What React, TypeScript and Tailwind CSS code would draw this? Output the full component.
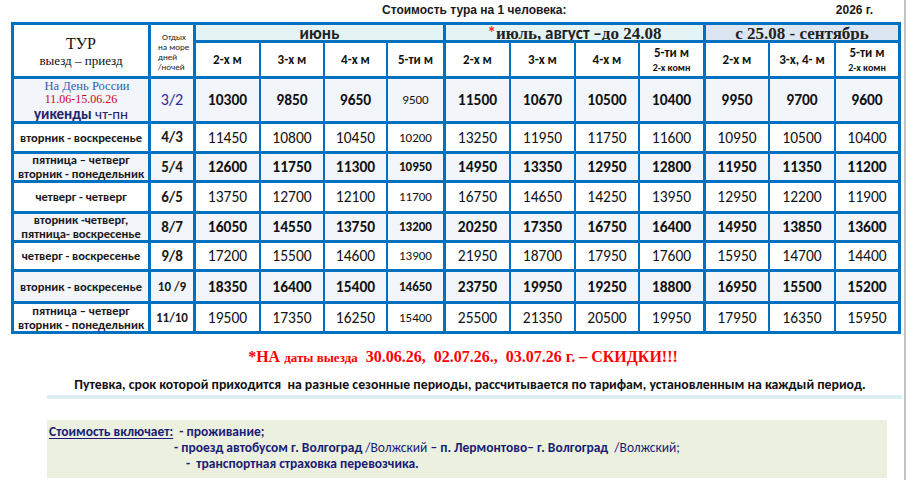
import React from "react";

const SANS = "font-['Carlito','Lato','Noto_Sans',sans-serif]";

type Row = {
  label: React.ReactNode;
  rest: React.ReactNode;
  values: string[];
  bold: boolean;
  shaded: boolean;
};

const rows: Row[] = [
  {
    label: (
      <div className="flex flex-col items-center font-normal">
        <span className="pl-3 font-['Liberation_Serif',serif] text-[12.5px] leading-[14px] text-[#2f5fae]">На День России</span>
        <span className="font-['Liberation_Serif',serif] text-[12px] leading-[13px] text-[#d0021b]">11.06-15.06.26</span>
        <span className="text-[15px] leading-[16px] text-[#23236e]">
          <b>уикенды</b> чт-пн
        </span>
      </div>
    ),
    rest: <span className="text-[16px] text-[#2b2b9a]">3/2</span>,
    values: ["10300", "9850", "9650", "9500", "11500", "10670", "10500", "10400", "9950", "9700", "9600"],
    bold: true,
    shaded: true,
  },
  {
    label: <span>вторник - воскресенье</span>,
    rest: <b className="text-[15px]">4/3</b>,
    values: ["11450", "10800", "10450", "10200", "13250", "11950", "11750", "11600", "10950", "10500", "10400"],
    bold: false,
    shaded: false,
  },
  {
    label: (
      <span className="leading-[14px]">
        пятница – четверг
        <br />
        вторник - понедельник
      </span>
    ),
    rest: <b className="text-[15px]">5/4</b>,
    values: ["12600", "11750", "11300", "10950", "14950", "13350", "12950", "12800", "11950", "11350", "11200"],
    bold: true,
    shaded: true,
  },
  {
    label: <span>четверг - четверг</span>,
    rest: <b className="text-[15px]">6/5</b>,
    values: ["13750", "12700", "12100", "11700", "16750", "14650", "14250", "13950", "12950", "12200", "11900"],
    bold: false,
    shaded: false,
  },
  {
    label: (
      <span className="leading-[14px]">
        вторник -четверг,
        <br />
        пятница- воскресенье
      </span>
    ),
    rest: <b className="text-[15px]">8/7</b>,
    values: ["16050", "14550", "13750", "13200", "20250", "17350", "16750", "16400", "14950", "13850", "13600"],
    bold: true,
    shaded: true,
  },
  {
    label: <span>четверг - воскресенье</span>,
    rest: <b className="text-[15px]">9/8</b>,
    values: ["17200", "15500", "14600", "13900", "21950", "18700", "17950", "17600", "15950", "14700", "14400"],
    bold: false,
    shaded: false,
  },
  {
    label: <span>вторник - воскресенье</span>,
    rest: <b className="text-[13px]">10 /9</b>,
    values: ["18350", "16400", "15400", "14650", "23750", "19950", "19250", "18800", "16950", "15500", "15200"],
    bold: true,
    shaded: true,
  },
  {
    label: (
      <span className="leading-[14px]">
        пятница – четверг
        <br />
        вторник - понедельник
      </span>
    ),
    rest: <b className="text-[13px]">11/10</b>,
    values: ["19500", "17350", "16250", "15400", "25500", "21350", "20500", "19950", "17950", "16350", "15950"],
    bold: false,
    shaded: false,
  },
];

const subHeads: React.ReactNode[] = [
  "2-х м",
  "3-х м",
  "4-х м",
  "5-ти м",
  "2-х м",
  "3-х м",
  "4-х м",
  <span className="flex flex-col items-center leading-[15px]">
    <span>5-ти м</span>
    <span className="text-[10px]">2-х комн</span>
  </span>,
  "2-х м",
  "3-х, 4- м",
  <span className="flex flex-col items-center leading-[15px]">
    <span>5-ти м</span>
    <span className="text-[10px]">2-х комн</span>
  </span>,
];

function isGroupStart(i: number) {
  return i === 0 || i === 4 || i === 8;
}

export default function App() {
  return (
    <div className="flex h-[480px] w-[908px] overflow-hidden bg-white text-black">
      <div className="flex w-[904px] flex-col">
        {/* title */}
        <div className="flex h-[22px] items-start pt-[1px] font-['Liberation_Sans',Arial,sans-serif] text-[12px] font-bold text-[#1a1a1a]">
          <span className="ml-[382px]">Стоимость тура на 1 человека:</span>
          <span className="ml-auto mr-[31px]">2026 г.</span>
        </div>

        {/* table */}
        <div className={`ml-[11px] w-[890px] border-[3px] border-[#0070c0] ${SANS} text-[#111]`}>
          <div className="grid grid-cols-[134px_45px_66px_64px_63px_57px_66px_65px_64px_65px_65px_66px_64px] grid-rows-[15px_36px_45px_30px_29px_31px_29px_29px_32px_30px]">
            {/* col1 header */}
            <div className="row-span-2 flex flex-col items-center justify-center bg-white pt-[2px] font-['Liberation_Serif',serif] leading-[17px]">
              <span className="text-[16px]">ТУР</span>
              <span className="text-[13px]">выезд – приезд</span>
            </div>
            {/* col2 header */}
            <div className="row-span-2 flex flex-col justify-center border-l-[3px] border-[#0070c0] bg-white pl-[7px] pt-[2px] text-[9px] leading-[10px] text-[#222]">
              <span className="pl-[4px]">Отдых</span>
              <span>на море</span>
              <span>дней</span>
              <span>/ночей</span>
            </div>
            {/* month headers */}
            <div className="col-span-4 flex items-center justify-center border-l-[3px] border-[#0070c0] bg-[#e4f4f4] pt-[1px] text-[17px] font-bold leading-none text-[#222]">
              июнь
            </div>
            <div className="col-span-4 flex items-center justify-center border-l-[3px] border-[#0070c0] bg-[#e4f4f4] pt-[1px] text-[17px] font-bold leading-none text-[#222]">
              <span className="text-[#ff2b2b]">*</span>
              <span className="font-['Liberation_Serif',serif]">июль,</span>
              <span>&nbsp;август –</span>
              <span className="font-['Liberation_Serif',serif]">до 24.08</span>
            </div>
            <div className="col-span-3 flex items-center justify-center border-l-[3px] border-[#0070c0] bg-[#dce6f2] pt-[1px] font-['Liberation_Serif',serif] text-[17px] font-bold leading-none text-[#222]">
              с 25.08 - сентябрь
            </div>
            {/* sub headers */}
            {subHeads.map((h, i) => (
              <div
                key={"h" + i}
                className={
                  isGroupStart(i)
                    ? "flex items-center justify-center border-l-[3px] border-t-[3px] border-[#0070c0] bg-white text-[13px] font-bold"
                    : "flex items-center justify-center border-l-2 border-t-[3px] border-[#0070c0] bg-white text-[13px] font-bold"
                }
              >
                {h}
              </div>
            ))}
            {/* data rows */}
            {rows.map((r, ri) => (
              <React.Fragment key={"r" + ri}>
                <div
                  className={
                    r.shaded
                      ? "flex items-center justify-center border-t-[3px] border-[#0070c0] bg-[#f2f5fa] text-center text-[12.5px] font-bold leading-[14px] text-[#1a1a1a]"
                      : "flex items-center justify-center border-t-[3px] border-[#0070c0] bg-white text-center text-[12.5px] font-bold leading-[14px] text-[#1a1a1a]"
                  }
                >
                  {r.label}
                </div>
                <div
                  className={
                    r.shaded
                      ? "flex items-center justify-center border-l-[3px] border-t-[3px] border-[#0070c0] bg-[#f2f5fa] text-[#1a1a1a]"
                      : "flex items-center justify-center border-l-[3px] border-t-[3px] border-[#0070c0] bg-white text-[#1a1a1a]"
                  }
                >
                  {r.rest}
                </div>
                {r.values.map((v, vi) => (
                  <div
                    key={"v" + vi}
                    className={[
                      "flex items-center justify-center border-t-[3px] border-[#0070c0]",
                      isGroupStart(vi) ? "border-l-[3px]" : "border-l-2",
                      r.shaded ? "bg-[#f2f5fa]" : "bg-white",
                      vi === 3 ? "text-[13px]" : "text-[15.5px]",
                      r.bold && !(vi === 3 && ri === 0) ? "font-bold" : "font-normal",
                    ].join(" ")}
                  >
                    {v}
                  </div>
                ))}
              </React.Fragment>
            ))}
          </div>
        </div>

        {/* red note */}
        <div className="mt-[14px] flex justify-center pl-[22px] font-['Liberation_Serif',serif] text-[16px] font-bold leading-[18px] text-[#ff0000]">
          <span className="whitespace-pre">
            *НА <span className="text-[13px]">даты выезда</span>
            {"  30.06.26,  02.07.26.,  03.07.26 г. – СКИДКИ!!!"}
          </span>
        </div>

        {/* info */}
        <div className={`mt-[10px] flex justify-center pl-[36px] ${SANS} text-[13.8px] font-bold leading-[16px] text-[#111]`}>
          <span className="whitespace-pre">Путевка, срок которой приходится  на разные сезонные периоды, рассчитывается по тарифам, установленным на каждый период.</span>
        </div>
        <div className="ml-[47px] mt-[2px] h-[4px] w-[855px] bg-[#daeef3]" />

        {/* includes */}
        <div className={`ml-[47px] mt-[21px] flex h-[58px] w-[840px] flex-col bg-[#ebf1de] pl-[2px] pt-[4px] ${SANS} text-[13.5px] font-bold leading-[16px] text-[#1c1c78]`}>
          <div className="flex">
            <span className="underline decoration-[#1c1c78] underline-offset-2">Стоимость включает:</span>
            <span className="whitespace-pre">{"  - проживание;"}</span>
          </div>
          <div className="whitespace-pre pl-[125px]">
            - проезд автобусом г. Волгоград <span className="font-normal">/Волжский</span> – п. Лермонтово– г. Волгоград{"  "}
            <span className="font-normal">/Волжский;</span>
          </div>
          <div className="whitespace-pre pl-[137px]">{"-  транспортная страховка перевозчика."}</div>
        </div>
      </div>
      <div className="ml-[0px] h-full w-[2px] bg-[#c4c4c4]" />
    </div>
  );
}
